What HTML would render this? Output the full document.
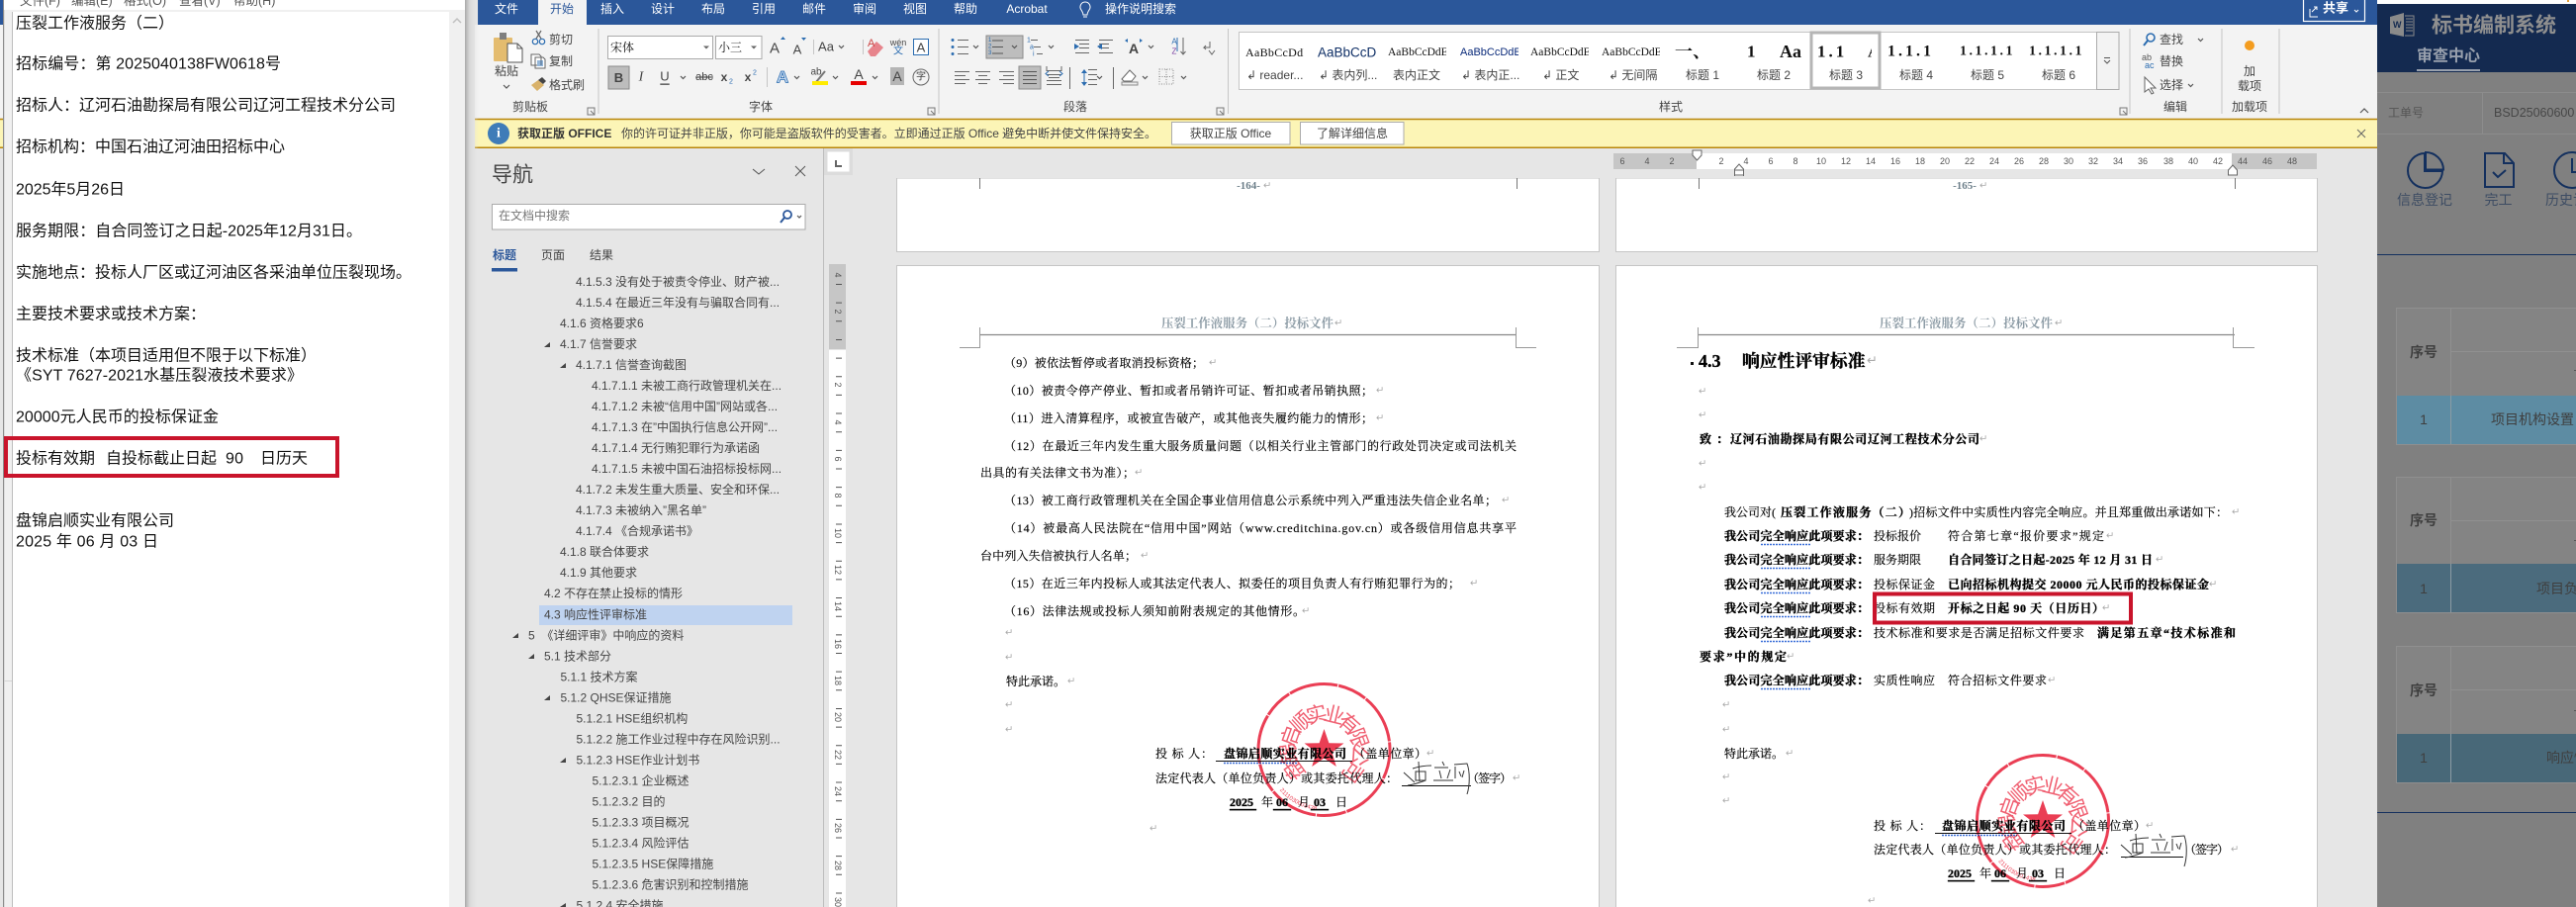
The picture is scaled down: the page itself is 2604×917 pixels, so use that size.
<!DOCTYPE html>
<html lang="zh-CN">
<head>
<meta charset="utf-8">
<title>标书编制系统</title>
<style>
html,body{margin:0;padding:0;width:2604px;height:917px;overflow:hidden;background:#e6e6e6}
svg{display:block}
text{dominant-baseline:central;white-space:pre;font-family:"Liberation Sans","Noto Sans CJK SC",sans-serif}
.c{text-anchor:middle}
.n{font-size:16px;fill:#111}
.u{font-size:12px;fill:#444}
.w{font-size:12px;fill:#fff}
.tr{font-size:12px;fill:#444}
.d{font-size:12px;fill:#000;stroke:#000;stroke-width:.15;font-family:"Liberation Serif","Noto Serif CJK SC",serif}
.b{font-weight:700}
.d.b{stroke-width:.35}
.m{font-size:10px;fill:#aaa;font-family:"DejaVu Sans",sans-serif}
.h{font-size:12.4px;fill:#8d9ca6;font-weight:700;font-family:"Liberation Serif","Noto Serif CJK SC",serif}
.s{font-size:11px;fill:#111;font-family:"Liberation Serif","Noto Serif CJK SC",serif}
.r{font-size:9px;fill:#555}
.ra{font-size:9px;fill:#555}
.i{fill:none;stroke:#555;stroke-width:1.2}
.g{font-size:14px;fill:#3d4c63}
.p{font-size:14px;fill:#3f3f3f}
.st{font-size:21px;fill:#ee4a5e;font-family:"Noto Sans CJK SC",sans-serif;letter-spacing:-3px}
.stamp{mix-blend-mode:multiply;opacity:.88}
</style>
</head>
<body>
<svg width="2604" height="917" viewBox="0 0 2604 917" xmlns="http://www.w3.org/2000/svg">
<defs>
<linearGradient id="sh" x1="0" x2="1" y1="0" y2="0"><stop offset="0" stop-color="#a8a8a8"/><stop offset=".35" stop-color="#d5d5d5" stop-opacity=".8"/><stop offset="1" stop-color="#e6e6e6" stop-opacity="0"/></linearGradient>
<clipPath id="cg1"><rect x="1252" y="40" width="66" height="26"/></clipPath>
<clipPath id="cg2"><rect x="1332" y="40" width="59" height="26"/></clipPath>
<clipPath id="cg3"><rect x="1403" y="40" width="59" height="26"/></clipPath>
<clipPath id="cg4"><rect x="1476" y="40" width="59" height="26"/></clipPath>
<clipPath id="cg5"><rect x="1547" y="40" width="59" height="26"/></clipPath>
<clipPath id="cg6"><rect x="1619" y="40" width="59" height="26"/></clipPath>
<clipPath id="cg7"><rect x="1836" y="40" width="56" height="26"/></clipPath>
<clipPath id="cg8"><rect x="1980" y="40" width="60" height="26"/></clipPath>
<clipPath id="cg9"><rect x="2051" y="40" width="60" height="26"/></clipPath>
</defs>

<rect width="2604" height="917" fill="#e6e6e6"/>

<!-- title bar -->
<rect x="0" y="0" width="3" height="25" fill="#2b579a"/>
<rect x="483" y="0" width="1920" height="25" fill="#2b579a"/>
<rect x="544" y="0" width="49" height="25" fill="#f3f3f3"/>
<text class="w c" x="512" y="9">文件</text>
<text class="u c" x="568" y="9" style="fill:#2b579a">开始</text>
<text class="w c" x="619" y="9">插入</text>
<text class="w c" x="670" y="9">设计</text>
<text class="w c" x="721" y="9">布局</text>
<text class="w c" x="772" y="9">引用</text>
<text class="w c" x="823" y="9">邮件</text>
<text class="w c" x="874" y="9">审阅</text>
<text class="w c" x="925" y="9">视图</text>
<text class="w c" x="976" y="9">帮助</text>
<text class="w c" x="1038" y="9">Acrobat</text>
<path d="M1097 2a5 5 0 0 1 4 8c-1 2-2 3-2 5h-4c0-2-1-3-2-5a5 5 0 0 1 4-8zM1095 17h4" fill="none" stroke="#fff" stroke-width="1"/>
<text class="w" x="1117" y="9">操作说明搜索</text>
<rect x="2328.5" y="-1" width="62" height="22.5" fill="none" stroke="#fff" stroke-width="1.2"/>
<path d="M2335 9v8h8M2337 12l5-5m-3 0h3v3" fill="none" stroke="#fff" stroke-width="1"/>
<text class="w b" x="2348" y="8" style="font-size:13px">共享</text>
<path d="M2380 10l2 2 2-2" fill="none" stroke="#fff"/>

<!-- ribbon -->
<rect x="0" y="25" width="3" height="95" fill="#f3f3f3"/>
<rect x="480" y="25" width="1923" height="95" fill="#f3f3f3"/>
<path d="M605 29v86M949 29v86M1241.500 29v86M2153 29v86M2246 29v86M2304 29v86" stroke="#c6c6c6"/>

<!-- clipboard group -->
<rect x="499" y="38" width="19" height="24" rx="1" fill="#e4bc6f"/>
<rect x="505" y="33" width="7" height="7" fill="#7f7f7f"/>
<path d="M513 44h10l5 5v14h-15z" fill="#fff" stroke="#555"/>
<path d="M523 44v5h5" fill="none" stroke="#555"/>
<text class="u c" x="512" y="72">粘贴</text>
<path d="M509 86l3 3 3-3" class="i"/>
<circle cx="541" cy="42" r="2.700" fill="none" stroke="#2b6cb0" stroke-width="1.200"/>
<circle cx="548" cy="42" r="2.700" fill="none" stroke="#2b6cb0" stroke-width="1.200"/>
<path d="M542 39l5-8M547 39l-5-8" stroke="#666" stroke-width="1.200"/>
<text class="u" x="555" y="40">剪切</text>
<path d="M537 55h8l2 2v9h-10zM541 58h8l2 2v9h-10z" fill="#fff" stroke="#666"/>
<path d="M543 62h6M543 64h6M543 66h6" stroke="#2b6cb0"/>
<text class="u" x="555" y="62">复制</text>
<path d="M537 86l7-5 6 5-7 6z" fill="#d9b26a"/>
<path d="M544 81l4-3 4 4-3 3z" fill="#444"/>
<text class="u" x="555" y="86">格式刷</text>
<text class="u c" x="536" y="108">剪贴板</text>
<path d="M594 109h7v7h-7zM597 112l4 4m-3 0h3v-3" fill="none" stroke="#777"/>

<!-- font group -->
<rect x="614.500" y="36.500" width="106" height="23" fill="#fff" stroke="#ababab"/>
<text class="s" x="617" y="48" style="font-size:12px">宋体</text>
<path d="M711 46.500h6l-3 3z" fill="#666"/>
<rect x="723.500" y="36.500" width="46.500" height="23" fill="#fff" stroke="#ababab"/>
<text class="s" x="726" y="48" style="font-size:12px">小三</text>
<path d="M759 46.500h6l-3 3z" fill="#666"/>
<text class="u c" x="783" y="49" style="font-size:15px">A</text><path d="M789 40l2.500-3 2.500 3z" fill="#2b6cb0"/>
<text class="u c" x="806" y="50" style="font-size:13px">A</text><path d="M810 38h5l-2.500 3z" fill="#2b6cb0"/>
<path d="M822.500 40v15M872.500 40v15" stroke="#c6c6c6"/>
<text class="u c" x="835" y="47" style="font-size:13px">Aa</text>
<path d="M848 46l2.500 2.500 2.500-2.500" class="i"/>
<path d="M877 52l9-10 7 6-8 9h-5z" fill="#e7848c"/><text class="u" x="877" y="44" style="font-size:11px;fill:#c44">A</text>
<text class="u c" x="908" y="43" style="font-size:9px">wén</text><text class="u c" x="908" y="52" style="font-size:10px;fill:#2b6cb0">文</text>
<rect x="923.500" y="39.500" width="15" height="16" fill="#fff" stroke="#2b6cb0"/><text class="u c" x="931" y="48" style="font-size:13px">A</text>
<rect x="615" y="67" width="21" height="23" fill="#bdbdbd" stroke="#8a8a8a"/>
<text class="u c b" x="625.500" y="78.500" style="font-size:13px">B</text>
<text class="u c" x="648" y="78" style="font-size:14px;font-style:italic;font-family:'Liberation Serif',serif">I</text>
<text class="u c" x="672" y="77" style="font-size:13px;text-decoration:underline">U</text>
<path d="M688 77l2.500 2.500 2.500-2.500" class="i"/>
<text class="u c" x="712" y="78" style="font-size:11px;text-decoration:line-through">abc</text>
<text class="u c b" x="732" y="78" style="font-size:12px">x</text><text class="u" x="737" y="83" style="font-size:7px;fill:#2b6cb0">2</text>
<text class="u c b" x="756" y="78" style="font-size:12px">x</text><text class="u" x="761" y="74" style="font-size:7px;fill:#2b6cb0">2</text>
<path d="M775.500 68v20" stroke="#c6c6c6"/>
<text class="u c b" x="791" y="78" style="font-size:17px;fill:#cfe0f4;stroke:#2b6cb0;stroke-width:.8">A</text>
<path d="M803 77l2.500 2.500 2.500-2.500" class="i"/>
<text class="u c" x="825" y="73" style="font-size:10px">ab</text><path d="M825 83l9-11" stroke="#777" stroke-width="2"/>
<rect x="821" y="82" width="16" height="4" fill="#ffeb00"/>
<path d="M842 77l2.500 2.500 2.500-2.500" class="i"/>
<text class="u c" x="868" y="75" style="font-size:14px">A</text>
<rect x="860" y="82" width="16" height="4" fill="#e60000"/>
<path d="M882 77l2.500 2.500 2.500-2.500" class="i"/>
<rect x="900" y="68" width="14" height="18" fill="#b5b5b5"/><text class="u c" x="907" y="77" style="font-size:14px">A</text>
<circle cx="931" cy="78" r="8" fill="none" stroke="#666"/><text class="u c" x="931" y="78" style="font-size:10px">字</text>
<text class="u c" x="769" y="108">字体</text>
<path d="M938 109h7v7h-7zM941 112l4 4m-3 0h3v-3" fill="none" stroke="#777"/>

<!-- paragraph group -->
<g stroke="#666" fill="none">
<path d="M968 40.500h11M968 47.500h11M968 54.500h11"/>
<path d="M1005 40.500h10M1005 47.500h10M1005 54.500h10M1042 40.500h7M1045 47.500h7M1048 54.500h6"/>
<path d="M1087 40.500h14M1091 44.500h10M1091 48.500h10M1087 53.500h14M1111 40.500h14M1111 44.500h10M1111 48.500h10M1111 53.500h14"/>
<path d="M965 72.500h15M965 76.500h11M965 80.500h15M965 84.500h11"/>
<path d="M986 72.500h15M989 76.500h9M986 80.500h15M989 84.500h9"/>
<path d="M1010 72.500h15M1014 76.500h11M1010 80.500h15M1014 84.500h11"/>
<path d="M1058 71.500h15M1058 85.500h15M1058 75.500h15M1058 81.500h15M1060 78.500h11"/>
<path d="M1100 70.500h9M1100 75.500h9M1100 80.500h9M1100 85.500h9"/>
<path d="M1223 42v6h-6l2-2m-2 2l2 2M1228 51l-3 4-3-4"/>
<path d="M1081.500 68v22M1125.500 68v22"/>
</g>
<g fill="#2b6cb0">
<circle cx="963" cy="40.500" r="1.500"/><circle cx="963" cy="47.500" r="1.500"/><circle cx="963" cy="54.500" r="1.500"/>
<path d="M1094 47l-5-3v6zM1112 47l5-3v6z" transform="translate(-3 0)"/>
<path d="M1096 70l-3 4h6zM1096 87l-3-4h6z"/>
<path d="M1190 38v14" stroke="#2b6cb0"/>
</g>
<rect x="997" y="36" width="37" height="23" fill="#bdbdbd" stroke="#8a8a8a"/>
<g stroke="#555"><path d="M1003 41h11M1003 47.500h11M1003 54h11"/></g>
<text x="999" y="41" style="font-size:6px;fill:#2b6cb0">1</text><text x="999" y="47.500" style="font-size:6px;fill:#2b6cb0">2</text><text x="999" y="54" style="font-size:6px;fill:#2b6cb0">3</text>
<path d="M1023 46l2.500 2.500 2.500-2.500" class="i"/>
<text x="1038" y="41" style="font-size:7px;fill:#2b6cb0">1</text><text x="1041" y="48" style="font-size:7px;fill:#2b6cb0">a</text><text x="1044" y="55" style="font-size:7px;fill:#2b6cb0">i</text>
<path d="M1060 46l2.500 2.500 2.500-2.500" class="i"/>
<path d="M984 46l2.500 2.500 2.500-2.500" class="i"/>
<text class="u c b" x="1146" y="49" style="font-size:14px">A</text><path d="M1137 41l3-2v4zM1155 41l-3-2v4z" fill="#2b6cb0"/>
<path d="M1161 46l2.500 2.500 2.500-2.500" class="i"/>
<text x="1187" y="42" style="font-size:8px;fill:#2b6cb0" class="c">A</text><text x="1187" y="52" style="font-size:8px;fill:#7a3fa0" class="c">Z</text>
<path d="M1196 38v17m-2.500-3l2.500 3 2.500-3" fill="none" stroke="#666"/>
<rect x="1030" y="67" width="22" height="23" fill="#bdbdbd" stroke="#8a8a8a"/>
<path d="M1034 72.500h14M1034 76.500h14M1034 80.500h14M1034 84.500h14" stroke="#555"/>
<path d="M1060 72l-3 2.500 3 2.500M1071 72l3 2.500-3 2.500" fill="none" stroke="#2b6cb0"/>
<path d="M1058 67v5M1073 67v5" stroke="#666"/>
<path d="M1096 72v13" stroke="#2b6cb0"/>
<path d="M1109 77l2.500 2.500 2.500-2.500" class="i"/>
<path d="M1134 80l8-9 6 6-4 5h-8z" fill="#fff" stroke="#666"/><rect x="1134" y="83" width="16" height="3" fill="#eee" stroke="#888"/>
<path d="M1155 77l2.500 2.500 2.500-2.500" class="i"/>
<rect x="1172" y="70" width="14" height="15" fill="none" stroke="#888" stroke-dasharray="1 1.500"/>
<path d="M1172 77.500h14M1179 70v15" stroke="#888" stroke-dasharray="1 1.500"/>
<path d="M1194 77l2.500 2.500 2.500-2.500" class="i"/>
<text class="u c" x="1087" y="108">段落</text>
<path d="M1230 109h7v7h-7zM1233 112l4 4m-3 0h3v-3" fill="none" stroke="#777"/>

<!-- style gallery -->
<rect x="1252.500" y="32.500" width="889" height="58" fill="#fff" stroke="#c6c6c6"/>
<g clip-path="url(#cg1)"><text class="s" x="1259" y="53" style="font-size:12px;letter-spacing:.3px">AaBbCcDdE</text></g>
<g clip-path="url(#cg2)"><text x="1332" y="53" style="font-size:13.500px;fill:#0f2f66">AaBbCcDdE</text></g>
<g clip-path="url(#cg3)"><text class="s" x="1403" y="53" style="font-size:11.500px">AaBbCcDdE</text></g>
<g clip-path="url(#cg4)"><text x="1476" y="53" style="font-size:11px;fill:#0a2a7a">AaBbCcDdE</text></g>
<g clip-path="url(#cg5)"><text class="s" x="1547" y="53" style="font-size:11.500px">AaBbCcDdE</text></g>
<g clip-path="url(#cg6)"><text class="s" x="1619" y="53" style="font-size:11.500px">AaBbCcDdE</text></g>
<text class="u" x="1260" y="76">↲ reader...</text>
<text class="u" x="1333" y="76">↲ 表内列...</text>
<text class="u" x="1408" y="76">表内正文</text>
<text class="u" x="1477" y="76">↲ 表内正...</text>
<text class="u" x="1559" y="76">↲ 正文</text>
<text class="u" x="1626" y="76">↲ 无间隔</text>
<text class="u c" x="1721" y="76">标题 1</text>
<text class="u c" x="1793" y="76">标题 2</text>
<text class="u c" x="1866" y="76">标题 3</text>
<text class="u c" x="1937" y="76">标题 4</text>
<text class="u c" x="2009" y="76">标题 5</text>
<text class="u c" x="2081" y="76">标题 6</text>
<rect x="1831" y="33" width="69" height="56" fill="none" stroke="#b5b5b5" stroke-width="3"/>
<text class="s b" x="1693" y="52" style="font-size:18px">一、</text>
<text class="s b" x="1766" y="52" style="font-size:17px">1</text>
<text class="s b" x="1799" y="52" style="font-size:18px">Aa</text>
<g clip-path="url(#cg7)"><text class="s b" x="1837" y="52" style="font-size:17px;letter-spacing:3px">1.1   Aa</text></g>
<text class="s b" x="1908" y="52" style="font-size:16px;letter-spacing:3px">1.1.1</text>
<g clip-path="url(#cg8)"><text class="s b" x="1981" y="52" style="font-size:14px;letter-spacing:2.500px">1.1.1.1</text></g>
<g clip-path="url(#cg9)"><text class="s b" x="2051" y="52" style="font-size:14px;letter-spacing:2.500px">1.1.1.1</text></g>
<rect x="2119.500" y="32.500" width="22.500" height="58" fill="#f3f3f3" stroke="#ababab"/>
<path d="M2127 58.500h6M2127 61l3 3 3-3" fill="none" stroke="#555"/>
<text class="u c" x="1689" y="108">样式</text>
<path d="M2143 109h7v7h-7zM2146 112l4 4m-3 0h3v-3" fill="none" stroke="#777"/>

<!-- editing -->
<circle cx="2174" cy="38" r="4" fill="none" stroke="#2b6cb0" stroke-width="1.600"/><path d="M2171 41l-4 5" stroke="#2b6cb0" stroke-width="2"/>
<text class="u" x="2183" y="40">查找</text><path d="M2222 39l2.500 2.500 2.500-2.500" class="i"/>
<text x="2165" y="58" style="font-size:9px;fill:#555">ab</text><text x="2168" y="66" style="font-size:9px;fill:#2b6cb0">ac</text>
<text class="u" x="2183" y="62">替换</text>
<path d="M2168 78v15l4-3 3 5 2-1-3-5h5z" fill="#fff" stroke="#666"/>
<text class="u" x="2183" y="86">选择</text><path d="M2212 85l2.500 2.500 2.500-2.500" class="i"/>
<text class="u c" x="2199" y="108">编辑</text>
<circle cx="2274" cy="46" r="5" fill="#f39c1f"/>
<text class="u c" x="2274" y="72">加</text><text class="u c" x="2274" y="87">载项</text>
<text class="u c" x="2274" y="108">加载项</text>
<path d="M2386 114l4-4 4 4" class="i"/>

<!-- yellow bar -->
<rect x="0" y="120" width="3" height="30" fill="#fcf5b6"/>
<rect x="480" y="120" width="1923" height="30" fill="#fcf5b6"/>
<path d="M480 120.500H2403M480 149.200H2403M0 120.500h3M0 149.200h3" stroke="#b8860b" stroke-width="1.500"/>
<circle cx="504" cy="135" r="11" fill="#3f7cb8"/><text class="c b" x="504" y="135" style="font-size:14px;fill:#fff;font-family:'Liberation Serif',serif">i</text>
<text class="u b" x="523" y="135" style="fill:#333">获取正版 OFFICE</text>
<text class="u" x="628" y="135" textLength="541">你的许可证并非正版，你可能是盗版软件的受害者。立即通过正版 Office 避免中断并使文件保持安全。</text>
<rect x="1184.500" y="123.500" width="119.500" height="22.500" fill="#fff" stroke="#ababab"/>
<text class="u c" x="1244" y="135">获取正版 Office</text>
<rect x="1314.500" y="123.500" width="104.500" height="22.500" fill="#fff" stroke="#ababab"/>
<text class="u c" x="1367" y="135">了解详细信息</text>
<path d="M2383 131l8 8M2391 131l-8 8" stroke="#666"/>

<!-- nav pane -->
<text x="497" y="177" style="font-size:21px;fill:#444">导航</text>
<path d="M761 171l6 5 6-5M804 168l10 10M814 168l-10 10" fill="none" stroke="#555"/>
<rect x="497.500" y="206.500" width="316.500" height="25.500" fill="#fff" stroke="#ababab"/>
<text class="u" x="504" y="218" style="fill:#777">在文档中搜索</text>
<circle cx="796" cy="217" r="4" fill="none" stroke="#2b579a" stroke-width="1.800"/><path d="M793 220l-4 5" stroke="#2b579a" stroke-width="2"/>
<path d="M806 218l2 2 2-2" class="i"/>
<text class="u b" x="498" y="258" style="fill:#2b579a">标题</text>
<text class="u" x="547" y="258">页面</text>
<text class="u" x="596" y="258">结果</text>
<rect x="497" y="271" width="26" height="3.500" fill="#2b579a"/>
<rect x="545" y="612" width="256" height="20" fill="#bfd3f0"/>
<text class="tr" x="582" y="285">4.1.5.3 没有处于被责令停业、财产被...</text>
<text class="tr" x="582" y="306">4.1.5.4 在最近三年没有与骗取合同有...</text>
<text class="tr" x="566" y="327">4.1.6 资格要求6</text>
<text class="tr" x="566" y="348">4.1.7 信誉要求</text>
<text class="tr" x="582" y="369">4.1.7.1 信誉查询截图</text>
<text class="tr" x="598" y="390">4.1.7.1.1 未被工商行政管理机关在...</text>
<text class="tr" x="598" y="411">4.1.7.1.2 未被“信用中国”网站或各...</text>
<text class="tr" x="598" y="432">4.1.7.1.3 在”中国执行信息公开网”...</text>
<text class="tr" x="598" y="453">4.1.7.1.4 无行贿犯罪行为承诺函</text>
<text class="tr" x="598" y="474">4.1.7.1.5 未被中国石油招标投标网...</text>
<text class="tr" x="582" y="495">4.1.7.2 未发生重大质量、安全和环保...</text>
<text class="tr" x="582" y="516">4.1.7.3 未被纳入”黑名单”</text>
<text class="tr" x="582" y="537">4.1.7.4 《合规承诺书》</text>
<text class="tr" x="566" y="558">4.1.8 联合体要求</text>
<text class="tr" x="566" y="579">4.1.9 其他要求</text>
<text class="tr" x="550" y="600">4.2 不存在禁止投标的情形</text>
<text class="tr" x="550" y="621.500">4.3 响应性评审标准</text>
<text class="tr" x="534" y="642.500">5  《详细评审》中响应的资料</text>
<text class="tr" x="550" y="663.500">5.1 技术部分</text>
<text class="tr" x="566.500" y="684.500">5.1.1 技术方案</text>
<text class="tr" x="566.500" y="705.500">5.1.2 QHSE保证措施</text>
<text class="tr" x="582.500" y="726.500">5.1.2.1 HSE组织机构</text>
<text class="tr" x="582.500" y="747.500">5.1.2.2 施工作业过程中存在风险识别...</text>
<text class="tr" x="582.500" y="768.500">5.1.2.3 HSE作业计划书</text>
<text class="tr" x="598.500" y="789.500">5.1.2.3.1 企业概述</text>
<text class="tr" x="598.500" y="810.500">5.1.2.3.2 目的</text>
<text class="tr" x="598.500" y="831.500">5.1.2.3.3 项目概况</text>
<text class="tr" x="598.500" y="852.500">5.1.2.3.4 风险评估</text>
<text class="tr" x="598.500" y="873.500">5.1.2.3.5 HSE保障措施</text>
<text class="tr" x="598.500" y="894.500">5.1.2.3.6 危害识别和控制措施</text>
<text class="tr" x="582.500" y="915.500">5.1.2.4 安全措施</text>
<g fill="#444">
<path d="M550 351h6v-5z"/><path d="M566 372h6v-5z"/><path d="M518 645h6v-5z"/><path d="M534 666h6v-5z"/><path d="M550 708h6v-5z"/><path d="M566 771h6v-5z"/><path d="M566 917h6v-4z"/>
</g>

<!-- rulers -->
<path d="M832.500 150V917" stroke="#bdbdbd"/>
<rect x="833" y="150" width="29" height="27" fill="#dcdcdc"/>
<rect x="836.500" y="153.500" width="22" height="20" fill="#fff"/>
<path d="M845 162v6h6" fill="none" stroke="#666" stroke-width="2"/>
<rect x="838" y="267" width="17" height="86" fill="#c6c6c6"/>
<rect x="838" y="354" width="17" height="563" fill="#fff"/>
<line x1="848" x2="848" y1="287" y2="917" stroke="#555" stroke-width="6" stroke-dasharray="1 17.650"/>
<text class="ra c" transform="rotate(90 847 278)" x="847" y="278">4</text>
<text class="ra c" transform="rotate(90 847 315)" x="847" y="315">2</text>
<text class="ra c" transform="rotate(90 847 389)" x="847" y="389">2</text>
<text class="ra c" transform="rotate(90 847 427)" x="847" y="427">4</text>
<text class="ra c" transform="rotate(90 847 464)" x="847" y="464">6</text>
<text class="ra c" transform="rotate(90 847 501)" x="847" y="501">8</text>
<text class="ra c" transform="rotate(90 847 539)" x="847" y="539">10</text>
<text class="ra c" transform="rotate(90 847 576)" x="847" y="576">12</text>
<text class="ra c" transform="rotate(90 847 613)" x="847" y="613">14</text>
<text class="ra c" transform="rotate(90 847 651)" x="847" y="651">16</text>
<text class="ra c" transform="rotate(90 847 688)" x="847" y="688">18</text>
<text class="ra c" transform="rotate(90 847 725)" x="847" y="725">20</text>
<text class="ra c" transform="rotate(90 847 763)" x="847" y="763">22</text>
<text class="ra c" transform="rotate(90 847 800)" x="847" y="800">24</text>
<text class="ra c" transform="rotate(90 847 837)" x="847" y="837">26</text>
<text class="ra c" transform="rotate(90 847 875)" x="847" y="875">28</text>
<text class="ra c" transform="rotate(90 847 912)" x="847" y="912">30</text>

<rect x="1631" y="155" width="84" height="16" fill="#c6c6c6"/>
<rect x="1715" y="155" width="541" height="16" fill="#fff"/>
<rect x="2256" y="155" width="86" height="16" fill="#c6c6c6"/>
<text class="r c" x="1640" y="163">6</text><text class="r c" x="1665" y="163">4</text><text class="r c" x="1690" y="163">2</text>
<text class="r c" x="1740" y="163">2</text><text class="r c" x="1765" y="163">4</text><text class="r c" x="1790" y="163">6</text><text class="r c" x="1815" y="163">8</text><text class="r c" x="1841" y="163">10</text><text class="r c" x="1866" y="163">12</text><text class="r c" x="1891" y="163">14</text><text class="r c" x="1916" y="163">16</text><text class="r c" x="1941" y="163">18</text><text class="r c" x="1966" y="163">20</text><text class="r c" x="1991" y="163">22</text><text class="r c" x="2016" y="163">24</text><text class="r c" x="2041" y="163">26</text><text class="r c" x="2066" y="163">28</text><text class="r c" x="2091" y="163">30</text><text class="r c" x="2116" y="163">32</text><text class="r c" x="2141" y="163">34</text><text class="r c" x="2166" y="163">36</text><text class="r c" x="2192" y="163">38</text><text class="r c" x="2217" y="163">40</text><text class="r c" x="2242" y="163">42</text><text class="r c" x="2267" y="163">44</text><text class="r c" x="2292" y="163">46</text><text class="r c" x="2317" y="163">48</text>
<path d="M1711 152h9v5l-4.500 5-4.500-5z" fill="#fff" stroke="#666"/>
<path d="M1753.500 171l4.500-5 4.500 5v6h-9zM1753.500 172h9v7h-9z" fill="#fff" stroke="#666"/>
<path d="M2252.500 172l4.500-5 4.500 5v5h-9z" fill="#fff" stroke="#666"/>

<!-- pages top -->
<rect x="906.500" y="180" width="710" height="74.500" fill="#fff" stroke="#c6c6c6"/>
<rect x="906" y="178" width="712" height="2" fill="#e6e6e6"/>
<rect x="1633.500" y="180" width="709" height="74.500" fill="#fff" stroke="#c6c6c6"/>
<rect x="1632" y="178" width="712" height="2" fill="#e6e6e6"/>
<path d="M990.500 180v11M1533.500 180v11M1717.500 180v11M2259.500 180v11" stroke="#777"/>
<text class="h c" x="1262" y="188" style="font-size:11px;font-weight:700;fill:#6d7f8a">-164-</text><text class="m" x="1277" y="188">↵</text>
<text class="h c" x="1986" y="188" style="font-size:11px;font-weight:700;fill:#6d7f8a">-165-</text><text class="m" x="2001" y="188">↵</text>

<!-- page 1 -->
<rect x="906.500" y="268.500" width="710" height="660" fill="#fff" stroke="#c6c6c6"/>
<text class="h" x="1174" y="327" textLength="174">压裂工作液服务（二）投标文件</text><text class="m" x="1349" y="327">↵</text>
<path d="M990 338.500H1533" stroke="#888" stroke-width="1.200"/>
<path d="M970 351.500h20.500V331M1553 351.500h-20.500V331" fill="none" stroke="#999"/>
<text class="d" x="1015" y="367" textLength="202">（9）被依法暂停或者取消投标资格；</text><text class="m" x="1222" y="367">↵</text>
<text class="d" x="1015" y="395" textLength="373">（10）被责令停产停业、暂扣或者吊销许可证、暂扣或者吊销执照；</text><text class="m" x="1391" y="395">↵</text>
<text class="d" x="1015" y="423" textLength="373">（11）进入清算程序，或被宣告破产，或其他丧失履约能力的情形；</text><text class="m" x="1391" y="423">↵</text>
<text class="d" x="1015" y="451" textLength="518">（12）在最近三年内发生重大服务质量问题（以相关行业主管部门的行政处罚决定或司法机关</text>
<text class="d" x="991" y="478" textLength="156">出具的有关法律文书为准）；</text><text class="m" x="1147" y="478">↵</text>
<text class="d" x="1015" y="506" textLength="498">（13）被工商行政管理机关在全国企事业信用信息公示系统中列入严重违法失信企业名单；</text><text class="m" x="1518" y="506">↵</text>
<text class="d" x="1015" y="534" textLength="518">（14）被最高人民法院在“信用中国”网站（www.creditchina.gov.cn）或各级信用信息共享平</text>
<text class="d" x="991" y="562" textLength="158">台中列入失信被执行人名单；</text><text class="m" x="1153" y="562">↵</text>
<text class="d" x="1015" y="590" textLength="461">（15）在近三年内投标人或其法定代表人、拟委任的项目负责人有行贿犯罪行为的；</text><text class="m" x="1486" y="590">↵</text>
<text class="d" x="1015" y="618" textLength="304">（16）法律法规或投标人须知前附表规定的其他情形。</text><text class="m" x="1316" y="618">↵</text>
<text class="m" x="1016" y="640">↵</text><text class="m" x="1016" y="665">↵</text>
<text class="d" x="1017" y="689">特此承诺。</text><text class="m" x="1079" y="689">↵</text>
<text class="m" x="1016" y="713">↵</text><text class="m" x="1016" y="738">↵</text>
<text class="d" x="1168" y="762" textLength="58">投 标 人：</text>
<text class="d b" x="1237" y="762" textLength="124">盘锦启顺实业有限公司</text>
<path d="M1229 769.500h138" stroke="#111"/>
<path d="M1237 771.500h75" stroke="#3a6fd8" stroke-width="1.500" stroke-dasharray="2 1"/>
<text class="d" x="1368" y="762" textLength="74">（盖单位章）</text><text class="m" x="1442" y="762">↵</text>
<text class="d" x="1168" y="787" textLength="245">法定代表人（单位负责人）或其委托代理人：</text>
<path d="M1417 794.500h70" stroke="#111"/>
<text class="d" x="1483" y="787" textLength="45">（签字）</text><text class="m" x="1529" y="787">↵</text>
<text class="d b" x="1243" y="811" style="text-decoration:underline">2025 </text>
<text class="d" x="1275" y="811">年</text><text class="d b" x="1287" y="811" style="text-decoration:underline"> 06 </text>
<text class="d" x="1312" y="811">月</text><text class="d b" x="1325" y="811" style="text-decoration:underline"> 03 </text>
<text class="d" x="1350" y="811">日</text>
<text class="m" x="1162" y="838">↵</text>

<!-- page 2 -->
<rect x="1633.500" y="268.500" width="709" height="660" fill="#fff" stroke="#c6c6c6"/>
<text class="h" x="1900" y="327" textLength="175">压裂工作液服务（二）投标文件</text><text class="m" x="2077" y="327">↵</text>
<path d="M1716 338.500H2259" stroke="#888" stroke-width="1.200"/>
<path d="M1695 351.500h21.500V331M2279 351.500h-21.500V331" fill="none" stroke="#999"/>
<rect x="1709" y="366" width="3" height="3" fill="#111"/>
<text class="d b" x="1717" y="365" style="font-size:18px">4.3</text>
<text class="d b" x="1761" y="365" style="font-size:17.800px">响应性评审标准</text><text class="m" x="1887" y="365" style="font-size:13px">↵</text>
<text class="m" x="1717" y="396">↵</text><text class="m" x="1717" y="420">↵</text>
<text class="d b" x="1718" y="444">致</text><text class="d b" x="1735" y="444">：</text>
<text class="d b" x="1749" y="444" textLength="252">辽河石油勘探局有限公司辽河工程技术分公司</text><text class="m" x="2001" y="444">↵</text>
<text class="m" x="1717" y="469">↵</text><text class="m" x="1717" y="493">↵</text>
<text class="d" x="1743" y="518">我公司对(</text>
<text class="d b" x="1800" y="518" textLength="131">压裂工作液服务（二）</text>
<text class="d" x="1930" y="518" textLength="322">)招标文件中实质性内容完全响应。并且郑重做出承诺如下：</text><text class="m" x="2256" y="518">↵</text>

<text class="d b" x="1743" y="542" textLength="146">我公司完全响应此项要求：</text>
<text class="d" x="1894" y="542">投标报价</text>
<text class="d" x="1969" y="542" textLength="158">符合第七章“报价要求”规定</text><text class="m" x="2129" y="542">↵</text>
<text class="d b" x="1743" y="566" textLength="146">我公司完全响应此项要求：</text>
<text class="d" x="1894" y="566">服务期限</text>
<text class="d b" x="1969" y="566" textLength="207">自合同签订之日起-2025 年 12 月 31 日</text><text class="m" x="2179" y="566">↵</text>
<text class="d b" x="1743" y="591" textLength="146">我公司完全响应此项要求：</text>
<text class="d" x="1894" y="591" textLength="62">投标保证金</text>
<text class="d b" x="1969" y="591" textLength="264">已向招标机构提交 20000 元人民币的投标保证金</text><text class="m" x="2233" y="591">↵</text>
<text class="d b" x="1743" y="615" textLength="146">我公司完全响应此项要求：</text>
<text class="d" x="1894" y="615" textLength="62">投标有效期</text>
<text class="d b" x="1969" y="615" textLength="158">开标之日起 90 天（日历日）</text><text class="m" x="2125" y="615">↵</text>
<text class="d b" x="1743" y="640" textLength="146">我公司完全响应此项要求：</text>
<text class="d" x="1894" y="640" textLength="213">技术标准和要求是否满足招标文件要求</text>
<text class="d b" x="2120" y="640" textLength="140">满足第五章“技术标准和</text>
<text class="d b" x="1718" y="664" textLength="88">要求”中的规定</text><text class="m" x="1806" y="664">↵</text>
<text class="d b" x="1743" y="688" textLength="146">我公司完全响应此项要求：</text>
<text class="d" x="1894" y="688" textLength="62">实质性响应</text>
<text class="d" x="1969" y="688" textLength="100">符合招标文件要求</text><text class="m" x="2070" y="688">↵</text>
<path d="M1780 550.500h50M1780 574.500h50M1780 599.500h50M1780 623.500h50M1780 648.500h50M1780 696.500h50" stroke="#3a6fd8" stroke-width="1.500" stroke-dasharray="2 1"/>
<text class="m" x="1741" y="713">↵</text><text class="m" x="1741" y="738">↵</text>
<text class="d" x="1743" y="762">特此承诺。</text><text class="m" x="1805" y="762">↵</text>
<text class="m" x="1741" y="786">↵</text><text class="m" x="1741" y="810">↵</text>
<text class="d" x="1894" y="835" textLength="58">投 标 人：</text>
<text class="d b" x="1963" y="835" textLength="125">盘锦启顺实业有限公司</text>
<path d="M1956 842.500h138" stroke="#111"/>
<path d="M1963 844.500h76" stroke="#3a6fd8" stroke-width="1.500" stroke-dasharray="2 1"/>
<text class="d" x="2095" y="835" textLength="74">（盖单位章）</text><text class="m" x="2169" y="835">↵</text>
<text class="d" x="1894" y="859" textLength="245">法定代表人（单位负责人）或其委托代理人：</text>
<path d="M2144 866.500h63" stroke="#111"/>
<text class="d" x="2208" y="859" textLength="45">（签字）</text><text class="m" x="2255" y="859">↵</text>
<text class="d b" x="1969" y="883" style="text-decoration:underline">2025 </text>
<text class="d" x="2001" y="883">年</text><text class="d b" x="2013" y="883" style="text-decoration:underline"> 06 </text>
<text class="d" x="2038" y="883">月</text><text class="d b" x="2051" y="883" style="text-decoration:underline"> 03 </text>
<text class="d" x="2076" y="883">日</text>
<text class="m" x="1888" y="911">↵</text>

<!-- stamp 1 -->
<g class="stamp" transform="translate(1338.500 758)">
<circle r="66.500" fill="none" stroke="#e8233c" stroke-width="3" stroke-dasharray="30 1 50 1"/>
<polygon points="0,-21 4.900,-6.800 20,-6.500 8,2.600 12.300,17 0,8.500 -12.300,17 -8,2.600 -20,-6.500 -4.900,-6.800" fill="#e8233c"/>
<path id="a1" d="M-23.800 28.300A37 37 0 1 1 21.200 30.300" fill="none"/>
<text class="st"><textPath href="#a1">盘锦启顺实业有限公司</textPath></text>
<path id="b1" d="M-50 32A58 58 0 0 0 50 32" fill="none"/>
<text style="font-size:6px;fill:#e8233c"><textPath href="#b1" startOffset="10">2111030001438</textPath></text>
</g>
<path d="M1419 781l11 10M1428 777c6-2 14-3 19-3M1434 770l1 20M1431 780h10v9h-10zM1423 794c8-1 12-3 18-5M1458 770l2 4M1450 776h14M1455 779l2 8M1466 778l-3 9M1449 789h20M1470 773l13-1c3 8 3 22 0 31M1471 775v12M1475 780l2 5M1480 779l-2 7" fill="none" stroke="#333" stroke-width="1"/>

<!-- stamp 2 -->
<g class="stamp" transform="translate(2065 830)">
<circle r="66.500" fill="none" stroke="#e8233c" stroke-width="3" stroke-dasharray="30 1 50 1"/>
<polygon points="0,-21 4.900,-6.800 20,-6.500 8,2.600 12.300,17 0,8.500 -12.300,17 -8,2.600 -20,-6.500 -4.900,-6.800" fill="#e8233c"/>
<path id="a2" d="M-23.800 28.300A37 37 0 1 1 21.200 30.300" fill="none"/>
<text class="st"><textPath href="#a2">盘锦启顺实业有限公司</textPath></text>
<path id="b2" d="M-50 32A58 58 0 0 0 50 32" fill="none"/>
<text style="font-size:6px;fill:#e8233c"><textPath href="#b2" startOffset="10">2111030001438</textPath></text>
</g>
<path transform="translate(725 73)" d="M1419 781l11 10M1428 777c6-2 14-3 19-3M1434 770l1 20M1431 780h10v9h-10zM1423 794c8-1 12-3 18-5M1458 770l2 4M1450 776h14M1455 779l2 8M1466 778l-3 9M1449 789h20M1470 773l13-1c3 8 3 22 0 31M1471 775v12M1475 780l2 5M1480 779l-2 7" fill="none" stroke="#333" stroke-width="1"/>

<!-- red box page 2 -->
<rect x="1895" y="600.500" width="259" height="29" fill="none" stroke="#c9142b" stroke-width="4"/>

<!-- right app -->
<rect x="2403" y="0" width="201" height="917" fill="#808080"/>
<rect x="2403" y="0" width="201" height="4" fill="#fff"/>
<rect x="2595" y="0" width="2" height="2" fill="#e6a23c"/>
<rect x="2403" y="4" width="201" height="69" fill="#142a50"/>
<path d="M2416 17l14-4v24l-14-3z" fill="#8a8a8a"/>
<path d="M2431 16h9v20h-9M2432 19h7M2432 22h7M2432 25h7M2432 28h7M2432 31h7" fill="none" stroke="#8a8a8a"/>
<text x="2419" y="25" style="font-size:9px;fill:#142a50;font-weight:700">W</text>
<text class="b" x="2458" y="26" style="font-size:21px;fill:#8f8f8f">标书编制系统</text>
<text class="b" x="2443" y="57" style="font-size:16px;fill:#98a0ad">审查中心</text>
<rect x="2443" y="70" width="64" height="2" fill="#98a0ad"/>
<path d="M2403 93.500H2604M2403 135.500H2604M2509.500 94v41" stroke="#8c8c8c"/>
<text x="2414" y="114" style="font-size:12px;fill:#555">工单号</text>
<text x="2521" y="114" style="font-size:12.500px;fill:#474747">BSD25060600</text>
<g fill="none" stroke="#14305e" stroke-width="2">
<path d="M2451 155a17.500 17.500 0 1 0 18 18h-18z"/>
<path d="M2452 154a18 18 0 0 1 18 17.500h-18z"/>
<path d="M2512 155h20l9 10v24h-29zM2531 155v10h10M2520 174l5 5 8-7"/>
<circle cx="2600" cy="172" r="18"/>
<path d="M2600 160v14h8"/>
</g>
<text class="g c" x="2451" y="202">信息登记</text>
<text class="g c" x="2525.500" y="202">完工</text>
<text class="g" x="2573" y="202">历史记录</text>
<path d="M2403 257.500H2604" stroke="#14305e"/>

<rect x="2422.500" y="311.500" width="190" height="138" fill="#848484" stroke="#8f8f8f"/>
<path d="M2477.500 311v138M2477 355.500h130M2423 400.500h190" stroke="#909090"/>
<rect x="2423" y="400" width="181" height="49" fill="#5d8ca3"/><path d="M2477.500 400v49" stroke="#8b9ca4"/>
<text class="p c b" x="2450" y="356">序号</text>
<text class="p c" x="2450" y="424">1</text>
<text class="p" x="2518" y="424" textLength="84">项目机构设置</text>
<rect x="2602" y="374" width="2" height="1" fill="#555"/>

<rect x="2422.500" y="482.500" width="190" height="137" fill="#848484" stroke="#8f8f8f"/>
<path d="M2477.500 482v137M2477 526.500h130" stroke="#909090"/>
<rect x="2423" y="570" width="181" height="49" fill="#4b6b7d"/><path d="M2477.500 570v49" stroke="#8b9ca4"/>
<text class="p c b" x="2450" y="526">序号</text>
<text class="p c" x="2450" y="595">1</text>
<text class="p" x="2564" y="595">项目负责人</text>
<rect x="2602" y="546" width="2" height="1" fill="#555"/>

<rect x="2422.500" y="653.500" width="190" height="138" fill="#848484" stroke="#8f8f8f"/>
<path d="M2477.500 653v138M2477 697.500h130" stroke="#909090"/>
<rect x="2423" y="742" width="181" height="49" fill="#486878"/><path d="M2477.500 742v49" stroke="#8b9ca4"/>
<text class="p c b" x="2450" y="698">序号</text>
<text class="p c" x="2450" y="766">1</text>
<text class="p" x="2574" y="766">响应性评审</text>
<rect x="2602" y="718" width="2" height="1" fill="#555"/>
<path d="M2403 821.500H2604" stroke="#14305e"/>

<!-- notepad -->
<rect x="470" y="0" width="14" height="917" fill="url(#sh)"/>
<rect x="0" y="150" width="3" height="767" fill="#e6e6e6"/>
<rect x="3" y="0" width="467" height="917" fill="#f0f0f0"/>
<rect x="3" y="0" width="1.200" height="917" fill="#8c8c8c"/>
<rect x="4" y="0" width="466" height="10" fill="#fff"/>
<rect x="12.500" y="12" width="441.500" height="905" fill="#fff"/>
<rect x="12" y="12" width="1" height="905" fill="#bdbdbd"/>
<path d="M4 688.500h8" stroke="#d5d5d5"/>
<path d="M458 23l4-4 4 4" fill="none" stroke="#c0c0c0" stroke-width="1.500"/>
<text x="20" y="1" style="font-size:12.500px;fill:#555">文件(F)</text>
<text x="72" y="1" style="font-size:12.500px;fill:#555">编辑(E)</text>
<text x="125" y="1" style="font-size:12.500px;fill:#555">格式(O)</text>
<text x="181" y="1" style="font-size:12.500px;fill:#555">查看(V)</text>
<text x="236" y="1" style="font-size:12.500px;fill:#555">帮助(H)</text>
<text class="n" x="16" y="24">压裂工作液服务（二）</text>
<text class="n" x="16" y="65" textLength="268">招标编号：第 2025040138FW0618号</text>
<text class="n" x="16" y="107">招标人：辽河石油勘探局有限公司辽河工程技术分公司</text>
<text class="n" x="16" y="149">招标机构：中国石油辽河油田招标中心</text>
<text class="n" x="16" y="192" textLength="110">2025年5月26日</text>
<text class="n" x="16" y="234" textLength="350">服务期限：自合同签订之日起-2025年12月31日。</text>
<text class="n" x="16" y="276">实施地点：投标人厂区或辽河油区各采油单位压裂现场。</text>
<text class="n" x="16" y="318">主要技术要求或技术方案：</text>
<text class="n" x="16" y="360">技术标准（本项目适用但不限于以下标准）</text>
<text class="n" x="16" y="380" textLength="290">《SYT 7627-2021水基压裂液技术要求》</text>
<text class="n" x="16" y="422" textLength="205">20000元人民币的投标保证金</text>
<text class="n" x="16" y="464">投标有效期</text>
<text class="n" x="107" y="464">自投标截止日起</text>
<text class="n" x="228" y="464" textLength="18">90</text>
<text class="n" x="263" y="464">日历天</text>
<text class="n" x="16" y="527">盘锦启顺实业有限公司</text>
<text class="n" x="16" y="548" textLength="144">2025 年 06 月 03 日</text>
<rect x="6" y="443" width="335" height="38" fill="none" stroke="#c9142b" stroke-width="4"/>
</svg>
</body>
</html>
